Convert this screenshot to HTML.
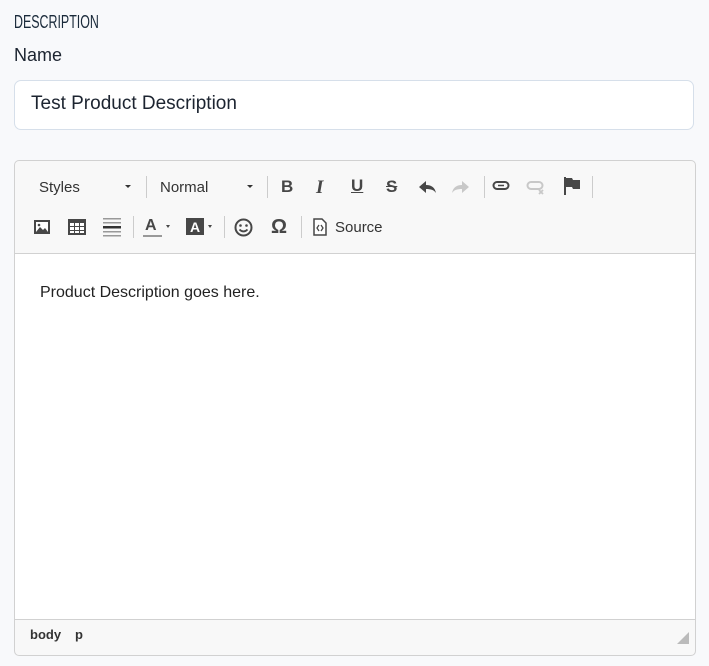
<!DOCTYPE html><html><head><style>
body{margin:0;background:#f8f9fb;width:709px;height:666px;position:relative;font-family:"Liberation Sans",sans-serif;overflow:hidden}
.a{position:absolute}
.sep{position:absolute;width:1px;height:22px;background:#ccc}
.ic{position:absolute;color:#474747;font-weight:bold;font-size:17px}
</style></head><body>
<div class="a" style="left:14px;top:12px;font-size:18px;color:#1a2a3a;transform:scaleX(0.69);transform-origin:left;letter-spacing:0">DESCRIPTION</div>
<div class="a" style="left:14px;top:45px;font-size:18px;color:#1c2430">Name</div>
<div class="a" style="left:14px;top:80px;width:678px;height:48px;border:1px solid #d6dfea;border-radius:7px;background:#fff"></div>
<div class="a" style="left:31px;top:93px;font-size:19px;color:#1c2430">Test Product Description</div>
<div class="a" style="left:14px;top:160px;width:680px;height:494px;border:1px solid #d1d1d1;border-radius:5px;background:#f8f8f8;overflow:hidden">
 <div class="a" style="left:0;top:92px;width:680px;height:365px;background:#fff;border-top:1px solid #d1d1d1;border-bottom:1px solid #d1d1d1"></div>
</div>
<div class="a" style="left:39px;top:179px;font-size:15px;color:#333">Styles</div>
<div class="a" style="left:125px;top:185px;border:3px solid transparent;border-top:3px solid #333"></div>
<div class="sep" style="left:146px;top:176px"></div>
<div class="a" style="left:160px;top:179px;font-size:15px;color:#333">Normal</div>
<div class="a" style="left:247px;top:185px;border:3px solid transparent;border-top:3px solid #333"></div>
<div class="sep" style="left:267px;top:176px"></div>
<div class="ic" style="left:281px;top:177px">B</div>
<div class="ic" style="left:316px;top:177px;font-style:italic;font-family:'Liberation Serif',serif;font-size:19px">I</div>
<div class="ic" style="left:351px;top:176px;text-decoration:underline">U</div>
<div class="ic" style="left:386px;top:177px;text-decoration:line-through">S</div>
<svg class="a" style="left:417px;top:178px" width="20" height="18" viewBox="0 0 20 18"><path d="M9 3L2 9l7 6v-4c5 0 8 1 10 4-1-5-4-8-10-8z" fill="#474747"/></svg>
<svg class="a" style="left:451px;top:178px" width="20" height="18" viewBox="0 0 20 18"><path d="M11 3l7 6-7 6v-4c-5 0-8 1-10 4 1-5 4-8 10-8z" fill="#c8c8c8"/></svg>
<div class="sep" style="left:484px;top:176px"></div>
<svg class="a" style="left:492px;top:180px" width="18" height="12"><rect x="1.5" y="2" width="15" height="7" rx="3.5" fill="none" stroke="#474747" stroke-width="2"/><line x1="6" y1="5.5" x2="12" y2="5.5" stroke="#474747" stroke-width="1.5"/></svg>
<svg class="a" style="left:526px;top:180px" width="20" height="16"><rect x="1.5" y="2" width="15" height="7" rx="3.5" fill="none" stroke="#c8c8c8" stroke-width="2"/><path d="M13 10l4 4M17 10l-4 4" stroke="#c8c8c8" stroke-width="1.8"/></svg>
<svg class="a" style="left:563px;top:176px" width="18" height="20"><rect x="1" y="1" width="2" height="18" fill="#474747"/><path d="M3 2h6l1 2h7v9h-7l-1-2H3z" fill="#474747"/></svg>
<div class="sep" style="left:592px;top:176px"></div>
<svg class="a" style="left:33px;top:219px" width="18" height="16"><rect x="1" y="1" width="16" height="14" fill="#474747"/><rect x="3" y="3" width="12" height="10" fill="#fff"/><path d="M3 13l4-5 3 3 2-2 3 4z" fill="#474747"/><circle cx="6" cy="6" r="1.3" fill="#474747"/></svg>
<svg class="a" style="left:67px;top:218px" width="20" height="18"><rect x="1" y="1" width="18" height="16" fill="#474747"/><g fill="#fff"><rect x="3" y="5" width="4" height="3"/><rect x="8" y="5" width="4" height="3"/><rect x="13" y="5" width="4" height="3"/><rect x="3" y="9" width="4" height="3"/><rect x="8" y="9" width="4" height="3"/><rect x="13" y="9" width="4" height="3"/><rect x="3" y="13" width="4" height="2"/><rect x="8" y="13" width="4" height="2"/><rect x="13" y="13" width="4" height="2"/></g></svg>
<svg class="a" style="left:103px;top:217px" width="18" height="20"><g fill="#999"><rect y="1" width="18" height="1.5"/><rect y="5" width="18" height="1.5"/><rect y="14" width="18" height="1.5"/><rect y="18" width="18" height="1.5"/></g><rect y="9" width="18" height="2.5" fill="#333"/></svg>
<div class="sep" style="left:133px;top:216px"></div>
<div class="ic" style="left:145px;top:217px;font-size:16px">A</div>
<div class="a" style="left:143px;top:235px;width:19px;height:2px;background:#999"></div>
<div class="a" style="left:166px;top:225px;border:2.5px solid transparent;border-top:3px solid #474747"></div>
<div class="a" style="left:186px;top:218px;width:18px;height:17px;background:#474747;color:#fff;font-weight:bold;font-size:14px;text-align:center;line-height:18px">A</div>
<div class="a" style="left:208px;top:225px;border:2.5px solid transparent;border-top:3px solid #474747"></div>
<div class="sep" style="left:224px;top:216px"></div>
<svg class="a" style="left:234px;top:218px" width="19" height="19"><circle cx="9.5" cy="9.5" r="8" fill="none" stroke="#474747" stroke-width="2"/><circle cx="6.5" cy="7.5" r="1.3" fill="#474747"/><circle cx="12.5" cy="7.5" r="1.3" fill="#474747"/><path d="M5.5 11.5q4 4 8 0" fill="none" stroke="#474747" stroke-width="1.8"/></svg>
<div class="ic" style="left:271px;top:216px;font-size:20px">Ω</div>
<div class="sep" style="left:301px;top:216px"></div>
<svg class="a" style="left:313px;top:218px" width="14" height="18"><path d="M1 1h8l4 4v12H1z" fill="#fff" stroke="#474747" stroke-width="1.5"/><path d="M6 7l-2 3 2 3M8 7l2 3-2 3" fill="none" stroke="#474747" stroke-width="1.3"/></svg>
<div class="a" style="left:335px;top:219px;font-size:15px;color:#333">Source</div>
<div class="a" style="left:40px;top:284px;font-size:16px;color:#222">Product Description goes here.</div>
<div class="a" style="left:30px;top:627px;font-size:13px;font-weight:bold;color:#333">body</div>
<div class="a" style="left:75px;top:627px;font-size:13px;font-weight:bold;color:#333">p</div>
<svg class="a" style="left:677px;top:632px" width="12" height="12"><path d="M12 0V12H0z" fill="#bbb"/></svg>
</body></html>
